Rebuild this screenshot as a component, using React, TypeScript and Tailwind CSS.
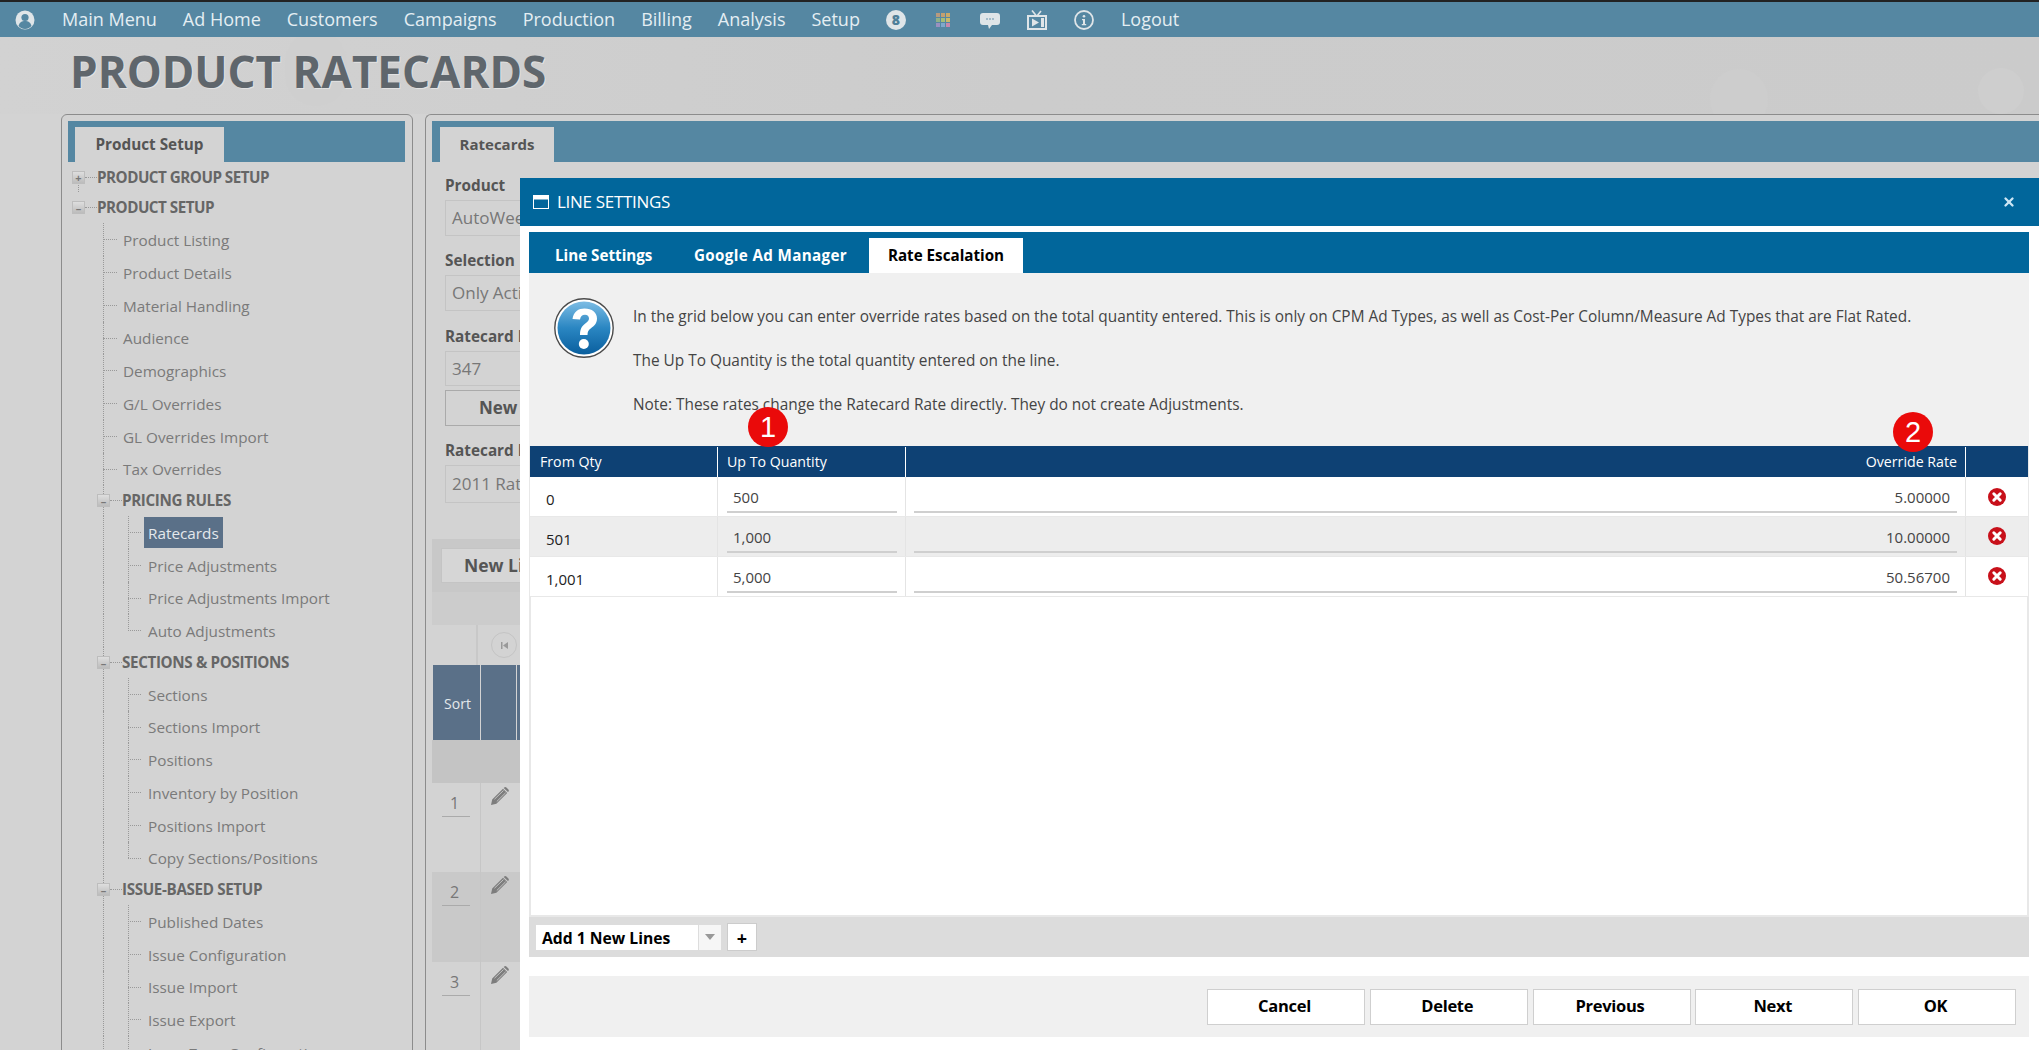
import { X } from "lucide-react";

const navItems = ["Main Menu", "Ad Home", "Customers", "Campaigns", "Production", "Billing", "Analysis", "Setup"];

type TreeRow = { label: string; level: 0 | 1 | 2; toggle?: "+" | "-"; active?: boolean; last?: boolean; h: string };

const treeRows: TreeRow[] = [
  { label: "PRODUCT GROUP SETUP", level: 0, toggle: "+", h: "h-[30px]" },
  { label: "PRODUCT SETUP", level: 0, toggle: "-", h: "h-[31px]" },
  { label: "Product Listing", level: 1, h: "h-[33px]" },
  { label: "Product Details", level: 1, h: "h-[33px]" },
  { label: "Material Handling", level: 1, h: "h-[33px]" },
  { label: "Audience", level: 1, h: "h-[32px]" },
  { label: "Demographics", level: 1, h: "h-[33px]" },
  { label: "G/L Overrides", level: 1, h: "h-[33px]" },
  { label: "GL Overrides Import", level: 1, h: "h-[33px]" },
  { label: "Tax Overrides", level: 1, h: "h-[32px]" },
  { label: "PRICING RULES", level: 1, toggle: "-", h: "h-[31px]" },
  { label: "Ratecards", level: 2, active: true, h: "h-[33px]" },
  { label: "Price Adjustments", level: 2, h: "h-[33px]" },
  { label: "Price Adjustments Import", level: 2, h: "h-[32px]" },
  { label: "Auto Adjustments", level: 2, last: true, h: "h-[33px]" },
  { label: "SECTIONS & POSITIONS", level: 1, toggle: "-", h: "h-[31px]" },
  { label: "Sections", level: 2, h: "h-[33px]" },
  { label: "Sections Import", level: 2, h: "h-[32px]" },
  { label: "Positions", level: 2, h: "h-[33px]" },
  { label: "Inventory by Position", level: 2, h: "h-[33px]" },
  { label: "Positions Import", level: 2, h: "h-[33px]" },
  { label: "Copy Sections/Positions", level: 2, last: true, h: "h-[32px]" },
  { label: "ISSUE-BASED SETUP", level: 1, toggle: "-", h: "h-[31px]" },
  { label: "Published Dates", level: 2, h: "h-[33px]" },
  { label: "Issue Configuration", level: 2, h: "h-[33px]" },
  { label: "Issue Import", level: 2, h: "h-[32px]" },
  { label: "Issue Export", level: 2, h: "h-[33px]" },
  { label: "Issue Zone Configuration", level: 2, h: "h-[33px]" },
];

const gridRows = [
  { from: "0", to: "500", rate: "5.00000" },
  { from: "501", to: "1,000", rate: "10.00000" },
  { from: "1,001", to: "5,000", rate: "50.56700" },
];

const labelClass = "text-[15.3px] leading-[20px] font-bold text-[#555]";
const inputClass = "flex w-[200px] items-center border border-[#c4c4c4] pl-[6px] text-[17px] text-[#777]";

function Toggle({ sign }: { sign: "+" | "-" }) {
  return (
    <span className="relative z-10 flex h-[13px] w-[13px] shrink-0 items-center justify-center border border-[#bdbdbd] bg-gradient-to-b from-[#dedede] to-[#bcbcbc] text-[11px] leading-none font-bold text-[#777]">
      {sign === "+" ? "+" : "–"}
    </span>
  );
}

function TreeItem({ row }: { row: TreeRow }) {
  const indent = row.level === 0 ? "pl-[4px]" : row.level === 1 ? "pl-[29px]" : "pl-[54px]";
  return (
    <div className={`relative flex items-center ${row.h} ${indent}`}>
      {/* dotted tree guides */}
      {row.toggle === "+" && <span className="absolute top-1/2 bottom-0 left-[10px] border-l border-dotted border-[#999]" />}
      {row.level > 0 && <span className="absolute top-0 bottom-0 left-[35px] border-l border-dotted border-[#999]" />}
      {row.level === 2 && (
        <span className={`absolute top-0 left-[60px] border-l border-dotted border-[#999] ${row.last ? "h-1/2" : "bottom-0"}`} />
      )}
      {row.toggle ? (
        <>
          <Toggle sign={row.toggle} />
          <span className="w-[12px] shrink-0 border-t border-dotted border-[#999]" />
          <span className={`text-[15.2px] font-bold text-[#666] ${row.level === 0 ? "tracking-[-0.5px]" : "tracking-[-0.35px]"}`}>{row.label}</span>
        </>
      ) : (
        <>
          <span className={`ml-[6px] shrink-0 border-t border-dotted border-[#999] ${row.level === 1 ? "mr-[2px] w-[14px]" : "mr-[3px] w-[13px]"}`} />
          <span
            className={`flex h-[31px] items-center px-[4px] pt-[1px] text-[15.3px] ${
              row.active ? "bg-[#5a7088] text-[#e4e8ec]" : "text-[#7a7a7a]"
            }`}
          >
            {row.label}
          </span>
        </>
      )}
    </div>
  );
}

function Badge({ n, className }: { n: string; className: string }) {
  return (
    <span
      className={`absolute z-20 flex h-[40px] w-[40px] items-center justify-center rounded-full bg-[#ea0a0a] text-[29px] leading-none text-white ${className}`}
      style={{ fontFamily: '"Liberation Sans", sans-serif' }}
    >
      {n}
    </span>
  );
}

function PencilIcon() {
  return (
    <svg width="20" height="20" viewBox="0 0 20 20" className="text-[#7d7d7d]">
      <path fill="currentColor" d="M1 19l1.2-5.4L13 2.800l4.200 4.200L6.400 17.800zM14.200 1.600c.7-.7 1.600-.7 2.200 0l2 2c.6.6.6 1.500 0 2.100L17.900 6 13.700 1.900z" />
      <path d="M4.500 13.200L13.500 4.500M6.800 15.500L15.600 6.800" stroke="#d3d3d3" strokeWidth="0.8" />
    </svg>
  );
}

function DeleteIcon() {
  return (
    <svg width="18" height="18" viewBox="0 0 18 18">
      <circle cx="9" cy="9" r="9" fill="#c8101a" />
      <path d="M5.800 5.800l6.400 6.400M12.200 5.800l-6.400 6.400" stroke="#fff" strokeWidth="3" strokeLinecap="round" />
    </svg>
  );
}

function HelpIcon() {
  return (
    <svg width="60" height="60" viewBox="0 0 60 60" className="shrink-0">
      <defs>
        <linearGradient id="help" x1="0" y1="0" x2="0" y2="1">
          <stop offset="0" stopColor="#7cbce4" />
          <stop offset="0.5" stopColor="#2a86c2" />
          <stop offset="1" stopColor="#0a5f9e" />
        </linearGradient>
      </defs>
      <circle cx="30" cy="30" r="29.200" fill="#fff" stroke="#4a4a4a" strokeWidth="1.400" />
      <circle cx="30" cy="30" r="26.500" fill="url(#help)" />
      <path d="M18.500 21c1-7.500 6-10.500 12-10.500 7.500 0 12.500 4 12.500 10 0 5-3 7.500-6 9.700-2.500 1.800-3.500 3.500-3.500 6.800h-7.500c0-6 1.800-8.700 5-11.200 2.300-1.800 4-3.200 4-5.300 0-2.300-1.500-3.700-4-3.700-3 0-4.500 1.700-5 4.700z" fill="#fff" />
      <circle cx="29.800" cy="46" r="5" fill="#fff" />
    </svg>
  );
}

export default function App() {
  return (
    <div
      className="relative h-[1050px] w-[2039px] overflow-hidden bg-[#d3d3d3] text-[#333]"
      style={{ fontFamily: '"Open Sans", "Noto Sans", sans-serif' }}
    >
      <div className="h-[2px] bg-[#222]" />

      {/* Top nav */}
      <nav className="flex h-[35px] items-center bg-[#5587a2] pl-[15px] text-[18px] text-[#e4eef3]">
        <svg width="20" height="20" viewBox="0 0 20 20" className="mr-[27px] shrink-0">
          <circle cx="10" cy="10" r="9.500" fill="#dfe5e8" />
          <circle cx="10" cy="7.500" r="3.600" fill="#5587a2" />
          <path d="M3.500 16c1-4 3.500-5 6.500-5s5.500 1 6.500 5c-2 2-4 3-6.500 3s-4.500-1-6.500-3z" fill="#5587a2" />
        </svg>
        <div className="flex items-center gap-[26px]">
          {navItems.map((item) => (
            <span key={item}>{item}</span>
          ))}
        </div>
        <div className="ml-[26px] flex items-center gap-[27px]">
          <span className="flex h-[20px] w-[20px] items-center justify-center rounded-full bg-[#dfe5e8] text-[14px] font-extrabold text-[#4f7f99]">8</span>
          <svg width="20" height="20" viewBox="0 0 20 20">
            <rect x="3" y="3" width="4" height="4" fill="#b79a7e" />
            <rect x="8" y="3" width="4" height="4" fill="#c2a070" />
            <rect x="13" y="3" width="4" height="4" fill="#c9a968" />
            <rect x="3" y="8" width="4" height="4" fill="#8fb088" />
            <rect x="8" y="8" width="4" height="4" fill="#a6bd78" />
            <rect x="13" y="8" width="4" height="4" fill="#c9b86a" />
            <rect x="3" y="13" width="4" height="4" fill="#9a90c0" />
            <rect x="8" y="13" width="4" height="4" fill="#7fa8cc" />
            <rect x="13" y="13" width="4" height="4" fill="#c788ac" />
          </svg>
          <svg width="20" height="20" viewBox="0 0 20 20">
            <path d="M3 3h14a3 3 0 013 3v6a3 3 0 01-3 3h-5l-3 4-1-4H3a3 3 0 01-3-3V6a3 3 0 013-3z" fill="#dfe5e8" />
            <circle cx="7" cy="9" r="0.800" fill="#5587a2" />
            <circle cx="10" cy="9" r="0.800" fill="#5587a2" />
            <circle cx="13" cy="9" r="0.800" fill="#5587a2" />
          </svg>
          <svg width="20" height="20" viewBox="0 0 20 20">
            <path d="M1 6h18v13H1z" stroke="#dfe5e8" strokeWidth="2" fill="none" />
            <path d="M5 0.500l4.500 5.500M14 1l-4 5" stroke="#dfe5e8" strokeWidth="1.600" fill="none" />
            <path d="M5 8.500l7 4-7 4z" fill="#dfe5e8" />
            <rect x="14" y="8" width="3" height="9" fill="#dfe5e8" />
          </svg>
          <svg width="20" height="20" viewBox="0 0 20 20">
            <circle cx="10" cy="10" r="9" stroke="#dfe5e8" strokeWidth="1.800" fill="none" />
            <path d="M8 9h3v5h1.200v1.300H7.800V14H9v-3.700H8z" fill="#dfe5e8" />
            <circle cx="10" cy="6.300" r="1.300" fill="#dfe5e8" />
          </svg>
        </div>
        <span className="ml-[27px]">Logout</span>
      </nav>

      {/* Title band, with the faint shapes of the page background */}
      <header className="relative h-[77px] overflow-hidden bg-gradient-to-r from-[#d2d2d2] via-[#cccccc] to-[#cbcbcb] pl-[70px]">
        <span className="absolute top-[-6px] left-[285px] h-[75px] w-[62px] rounded-full bg-[#cfcfcf]" />
        <span className="absolute top-[32px] left-[1710px] h-[60px] w-[58px] rounded-full bg-[#cdcdcd]" />
        <span className="absolute top-[31px] left-[1978px] h-[46px] w-[46px] rounded-full bg-[#cecece]" />
        <h1 className="relative text-[44px] leading-[68px] font-bold tracking-[0px] text-[#5f666c] [text-shadow:1px_1px_0_#e2e2e2]">PRODUCT RATECARDS</h1>
      </header>

      {/* Panels */}
      <div className="flex gap-[12px] pl-[61px]">
        <aside className="h-[940px] w-[352px] shrink-0 rounded-t-[6px] border border-[#8c8c8c] bg-[#d3d3d3] pt-[6px] pr-[7px] pl-[6px]">
          <div className="flex h-[41px] items-end bg-[#5587a2] pl-[7px]">
            <div className="flex h-[35px] w-[149px] items-center justify-center bg-[#d3d3d3] text-[15.300px] font-bold text-[#555]">Product Setup</div>
          </div>
          <div>
            {treeRows.map((row) => (
              <TreeItem key={row.label} row={row} />
            ))}
          </div>
        </aside>

        <main className="h-[940px] flex-1 rounded-tl-[6px] border-t border-l border-[#8c8c8c] bg-[#d3d3d3] pt-[6px] pl-[6px]">
          <div className="flex h-[41px] items-end bg-[#5587a2] pl-[8px]">
            <div className="flex h-[35px] w-[114px] items-center justify-center bg-[#d3d3d3] text-[15px] font-bold text-[#555]">Ratecards</div>
          </div>

          <div className="pl-[13px]">
            <div className={`mt-[13px] ${labelClass}`}>Product</div>
            <div className={`mt-[5px] h-[36px] ${inputClass}`}>AutoWeek</div>
            <div className={`mt-[14px] ${labelClass}`}>Selection</div>
            <div className={`mt-[5px] h-[36px] ${inputClass}`}>Only Active</div>
            <div className={`mt-[15px] ${labelClass}`}>Ratecard ID</div>
            <div className={`mt-[5px] h-[35px] ${inputClass}`}>347</div>
            <div className="mt-[4px] flex h-[36px] w-[200px] items-center border border-[#aaa] pl-[33px] text-[17px] font-bold text-[#555]">New</div>
            <div className={`mt-[14px] ${labelClass}`}>Ratecard Name</div>
            <div className={`mt-[5px] h-[38px] ${inputClass}`}>2011 Rates</div>
          </div>

          <div className="mt-[36px] flex h-[53px] items-center bg-[#c8c8c8] pl-[9px]">
            <div className="flex h-[35px] w-[120px] items-center border border-[#c4c4c4] bg-[#d6d6d6] pl-[22px] text-[17.500px] font-bold whitespace-nowrap text-[#555]">New Line</div>
          </div>
          <div className="h-[33px] bg-[#cccccc]" />
          <div className="flex h-[40px] bg-[#d3d3d3]">
            <div className="w-[46px] border-r-2 border-[#c8c8c8]" />
            <div className="flex items-center pl-[13px]">
              <span className="flex h-[26px] w-[26px] items-center justify-center rounded-full border border-[#c4c4c4]">
                <svg width="9" height="9" viewBox="0 0 9 9">
                  <rect x="1" y="1" width="1.500" height="7" fill="#999" />
                  <path d="M8 1v7L3 4.500z" fill="#999" />
                </svg>
              </span>
            </div>
          </div>
          <div className="flex h-[75px] border-l border-[#d3d3d3] bg-[#5a7088] text-[14px] text-[#e4e8ec]">
            <div className="flex w-[48px] items-center justify-center border-r border-[#d3d3d3] pt-[1px] pl-[2px]">Sort</div>
            <div className="w-[36px] border-r border-[#d3d3d3]" />
          </div>
          <div className="h-[43px] bg-[#c4c4c4]" />
          {["1", "2", "3"].map((n, i) => (
            <div key={n} className={`flex ${i === 0 ? "h-[89px]" : "h-[90px]"} ${i === 1 ? "bg-[#c9c9c9]" : "bg-[#d3d3d3]"}`}>
              <div className="w-[49px] border-r border-[#c6c6c6] px-[10px] pt-[9px]">
                <div className="h-[25px] border-b border-[#aaa] pl-[8px] text-[16px] leading-[22px] text-[#777]">{n}</div>
              </div>
              <div className="pt-[3px] pl-[9px]"><PencilIcon /></div>
            </div>
          ))}
        </main>
      </div>

      {/* Line settings dialog */}
      <section className="absolute top-[178px] right-0 bottom-0 left-[520px] bg-white">
        <div className="flex h-[48px] items-center bg-[#01669b] pr-[23px] pl-[13px] text-white">
          <svg width="16" height="14" viewBox="0 0 16 14" className="mr-[8px] shrink-0">
            <rect x="0.500" y="0.500" width="15" height="13" fill="none" stroke="#fff" />
            <rect x="0.500" y="0.500" width="15" height="4" fill="#fff" />
          </svg>
          <span className="text-[17px] tracking-[-0.3px]">LINE SETTINGS</span>
          <X size={14} strokeWidth={4} className="ml-auto text-[#cde6f5]" />
        </div>

        <div className="relative mt-[6px] mr-[10px] ml-[9px]">
          <div className="flex h-[41px] items-end bg-[#01669b] pl-[7px] text-[15.200px] font-bold text-white">
            <div className="flex h-[35px] w-[158px] items-center pl-[19px]">Line Settings</div>
            <div className="flex h-[35px] w-[175px] items-center tracking-[0.35px]">Google Ad Manager</div>
            <div className="flex h-[35px] w-[154px] items-center justify-center bg-white text-black">Rate Escalation</div>
          </div>

          <div className="flex h-[173px] bg-[#f0f0f0] pt-[25px] pl-[25px]">
            <HelpIcon />
            <div className="ml-[19px] flex flex-col gap-[22px] pt-[8px] text-[15.400px] leading-[22px] text-[#444]">
              <p>In the grid below you can enter override rates based on the total quantity entered. This is only on CPM Ad Types, as well as Cost-Per Column/Measure Ad Types that are Flat Rated.</p>
              <p>The Up To Quantity is the total quantity entered on the line.</p>
              <p>Note: These rates change the Ratecard Rate directly. They do not create Adjustments.</p>
            </div>
          </div>

          <Badge n="1" className="top-[175px] left-[219px]" />
          <Badge n="2" className="top-[180px] left-[1364px]" />

          {/* Rate grid */}
          <div className="h-[471px] border-x-2 border-b-2 border-[#e8e8e8] bg-white">
            <div className="-mx-[1px] flex h-[31px] items-center bg-[#0e4174] pt-[1px] text-[14.200px] leading-none text-white">
              <div className="flex h-full w-[188px] items-center border-r border-white pl-[10px]">From Qty</div>
              <div className="flex h-full w-[188px] items-center border-r border-white pl-[9px]">Up To Quantity</div>
              <div className="flex h-full flex-1 items-center justify-end border-r border-white pr-[8px]">Override Rate</div>
              <div className="w-[62px]" />
            </div>
            {gridRows.map((r, i) => (
              <div key={r.from} className={`-mx-[1px] flex h-[40px] border-b border-[#e8e8e8] text-[15px] ${i === 1 ? "bg-[#ededed]" : "bg-white"}`}>
                <div className="flex w-[188px] items-center border-r border-[#e4e4e4] pt-[5px] pl-[16px] text-[#222]">{r.from}</div>
                <div className="w-[188px] border-r border-[#e4e4e4] pt-[3px] pr-[8px] pl-[9px]">
                  <div className="h-[33px] border-b-2 border-[#cfcfcf] pl-[6px] leading-[34px] text-[#444]">{r.to}</div>
                </div>
                <div className="flex-1 border-r border-[#e4e4e4] pt-[3px] pr-[8px] pl-[8px]">
                  <div className="h-[33px] border-b-2 border-[#cfcfcf] pr-[7px] text-right leading-[34px] text-[#444]">{r.rate}</div>
                </div>
                <div className={`flex w-[62px] items-start justify-center ${i === 0 ? "pt-[11px]" : "pt-[10px]"}`}><DeleteIcon /></div>
              </div>
            ))}
          </div>

          <div className="flex h-[40px] items-center bg-[#dcdcdc] pl-[7px]">
            <div className="flex h-[25px] w-[185px] items-stretch bg-white">
              <div className="flex flex-1 items-center pt-[3px] pl-[6px] text-[15.700px] font-bold text-black">Add 1 New Lines</div>
              <div className="flex w-[23px] items-center justify-center border-l border-[#ddd] bg-[#f6f6f6]">
                <span className="h-0 w-0 border-x-[5px] border-t-[6px] border-x-transparent border-t-[#999]" />
              </div>
            </div>
            <div className="ml-[6px] flex h-[28px] w-[30px] items-center justify-center border border-[#ccc] bg-white pt-[1px] text-[18px] leading-none font-bold text-black">+</div>
          </div>

          <div className="mt-[19px] flex h-[61px] items-center justify-end gap-[4.750px] bg-[#f0f0f0] pr-[13px]">
            {["Cancel", "Delete", "Previous", "Next", "OK"].map((label) => (
              <button key={label} className="flex h-[36px] w-[158px] items-center justify-center border border-[#cfcfcf] bg-white pr-[3px] text-[16.500px] font-bold tracking-[-0.3px] text-black">
                {label}
              </button>
            ))}
          </div>
        </div>
      </section>
    </div>
  );
}
